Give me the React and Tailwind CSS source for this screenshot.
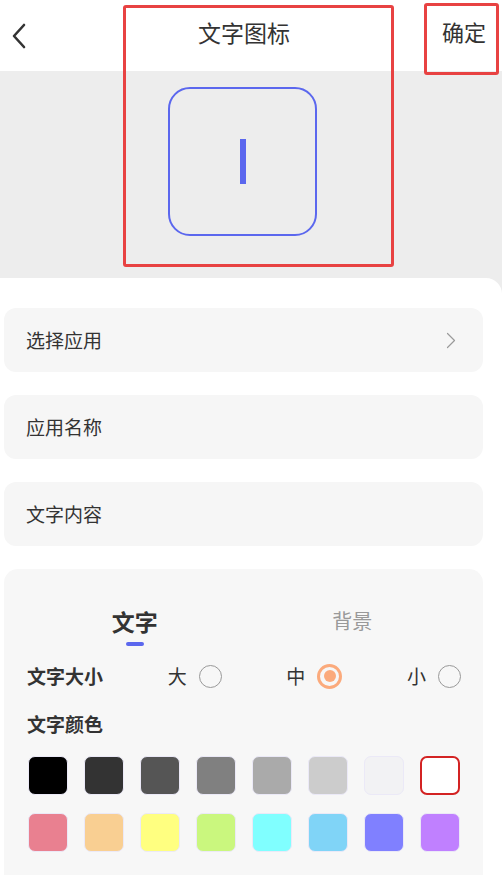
import React from "react";

const font = { fontFamily: '"Noto Sans CJK SC", "Noto Sans", sans-serif' };

const row1 = ["#000000", "#333333", "#555555", "#808080", "#aaaaaa", "#cccccc", "#f2f2f4", "#ffffff"];
const row2 = ["#e98090", "#f9cf92", "#ffff80", "#caf77e", "#80ffff", "#80d4f7", "#8080ff", "#c080ff"];

function Swatch({ color, selected }) {
  return (
    <div
      className={
        "w-[40px] h-[39px] rounded-[7px] " +
        (selected ? "border-2 border-[#d32323]" : "border border-[#ebe9f7]")
      }
      style={{ backgroundColor: color }}
    />
  );
}

function Radio({ label, checked }) {
  return (
    <div className="flex items-center gap-[12px]">
      <span className="text-[19px] leading-[30px] text-[#333]">{label}</span>
      {checked ? (
        <div className="w-[25px] h-[25px] rounded-full border-[3px] border-[#fbaa7c] flex items-center justify-center">
          <div className="w-[12px] h-[12px] rounded-full bg-[#fbaa7c]" />
        </div>
      ) : (
        <div className="w-[23px] h-[23px] rounded-full border-[1.5px] border-[#999]" />
      )}
    </div>
  );
}

export default function App() {
  return (
    <div className="relative w-[502px] h-[875px] overflow-hidden bg-[#ededed]" style={font}>
      {/* header */}
      <div className="h-[71px] bg-white flex items-center relative">
        <div className="pl-[11px] pt-[0px]">
          <svg width="16" height="26" viewBox="0 0 16 26" fill="none">
            <path d="M13 2 L3 13 L13 24" stroke="#333" strokeWidth="2.6" strokeLinecap="round" strokeLinejoin="round" />
          </svg>
        </div>
        <div className="absolute left-0 right-0 top-0 h-[71px] flex items-center justify-center pointer-events-none">
          <span className="text-[23px] text-[#333] leading-none ml-[-14px] mt-[-6px]">文字图标</span>
        </div>
        <div className="ml-auto pr-[16px] mt-[-6px]">
          <span className="text-[22px] text-[#333] leading-none">确定</span>
        </div>
      </div>

      {/* preview band */}
      <div className="h-[207px] flex justify-center pt-[16px]">
        <div className="w-[149px] h-[149px] rounded-[22px] border-[2px] border-[#5b67ee] flex items-center justify-center ml-[-17px]">
          <div className="w-[6px] h-[45px] bg-[#5b67ee]" />
        </div>
      </div>

      {/* white section */}
      <div className="bg-white rounded-tr-[16px] h-[700px] pt-[30px] pl-[4px] pr-[19px] flex flex-col gap-[23px]">
        <div className="h-[64px] rounded-[12px] bg-[#f6f6f6] flex items-center pl-[22px] pr-[27px]">
          <span className="text-[19px] text-[#333]">选择应用</span>
          <svg className="ml-auto" width="10" height="17" viewBox="0 0 10 17" fill="none">
            <path d="M1.5 1.5 L8.5 8.5 L1.5 15.5" stroke="#9a9a9a" strokeWidth="1.2" strokeLinecap="round" strokeLinejoin="round" />
          </svg>
        </div>
        <div className="h-[64px] rounded-[12px] bg-[#f6f6f6] flex items-center pl-[22px]">
          <span className="text-[19px] text-[#333]">应用名称</span>
        </div>
        <div className="h-[64px] rounded-[12px] bg-[#f6f6f6] flex items-center pl-[22px]">
          <span className="text-[19px] text-[#333]">文字内容</span>
        </div>

        <div className="rounded-[14px] bg-[#f7f7f7] px-[22px] pt-[37px] pb-[40px]">
          <div className="grid grid-cols-2">
            <div className="flex flex-col items-center">
              <span className="text-[23px] font-bold leading-[30px] text-[#333]">文字</span>
              <div className="mt-[6px] w-[18px] h-[4px] rounded-full bg-[#5b67ee]" />
            </div>
            <div className="flex flex-col items-center">
              <span className="text-[20px] leading-[30px] text-[#999]">背景</span>
            </div>
          </div>

          <div className="mt-[15px] flex items-center justify-between pl-[1px]">
            <span className="text-[19px] font-bold leading-[30px] text-[#333]">文字大小</span>
            <Radio label="大" />
            <Radio label="中" checked />
            <Radio label="小" />
          </div>

          <div className="mt-[19px] pl-[1px]">
            <span className="text-[19px] font-bold leading-[28px] text-[#333]">文字颜色</span>
          </div>

          <div className="mt-[18px] pl-[2px] flex gap-[16px]">
            {row1.map((c, i) => (
              <Swatch key={i} color={c} selected={i === 7} />
            ))}
          </div>
          <div className="mt-[18px] pl-[2px] flex gap-[16px]">
            {row2.map((c, i) => (
              <Swatch key={i} color={c} />
            ))}
          </div>
        </div>
      </div>

      {/* red annotation boxes */}
      <div className="absolute left-[123px] top-[5px] w-[271px] h-[262px] border-[3px] border-[#e84242] rounded-[3px]" />
      <div className="absolute left-[424px] top-[3px] w-[75px] h-[72px] border-[3px] border-[#e84242] rounded-[3px]" />
    </div>
  );
}
